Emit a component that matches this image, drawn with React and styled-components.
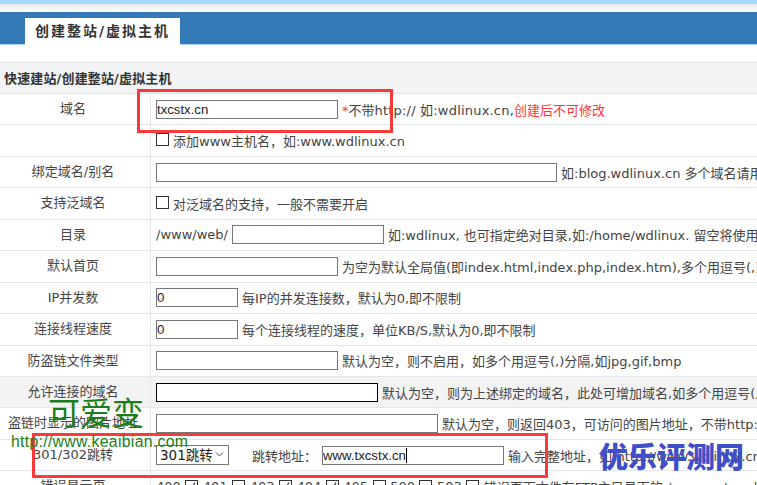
import React from "react";
import styled, { createGlobalStyle } from "styled-components";

const GlobalStyle = createGlobalStyle`
  html, body {
    margin: 0;
    padding: 0;
    width: 757px;
    height: 485px;
    overflow: hidden;
    background: #fff;
    font-family: "DejaVu Sans", "Noto Sans CJK SC", sans-serif;
    font-size: 13px;
    color: #444;
  }
`;

const Page = styled.div`
  position: relative;
  width: 757px;
  height: 485px;
  overflow: hidden;
`;

const TopStrip = styled.div`
  height: 4px;
  background: #a6d7ff;
`;

const TopShade = styled.div`
  height: 8px;
  background: linear-gradient(#ececec, #fff);
`;

const Header = styled.div`
  height: 33px;
  background: #337ab7;
  border-bottom: 1px solid #a6d7ff;
  box-sizing: border-box;
  padding: 6px 0 0 25px;
`;

const Tab = styled.div`
  width: 155px;
  height: 27px;
  box-sizing: border-box;
  background: #fff;
  color: #333;
  font-weight: 700;
  font-size: 14px;
  letter-spacing: 2px;
  line-height: 27px;
  text-align: center;
`;

const Section = styled.div`
  margin-top: 17px;
  height: 32px;
  box-sizing: border-box;
  background: #f1f3f5;
  border-top: 1px solid #e4e6ee;
  border-bottom: 1px solid #e4e6ee;
  padding-left: 4px;
  color: #333;
  font-weight: 700;
  font-size: 13px;
  letter-spacing: 0.15px;
  line-height: 31px;
  white-space: nowrap;
`;

const Row = styled.div`
  display: grid;
  grid-template-columns: 151px 1fr;
  height: 31.45px;
  box-sizing: border-box;
  border-bottom: 1px solid #e4e6ee;
  background: ${(p) => (p.$shaded ? "#f3f3f3" : "#fff")};
`;

const Label = styled.div`
  border-right: 1px solid #e4e6ee;
  padding-right: 4px;
  text-align: center;
  line-height: 30px;
  white-space: nowrap;
`;

const Body = styled.div`
  display: flex;
  align-items: center;
  gap: 4px;
  padding-left: 5px;
  white-space: nowrap;
  overflow: hidden;
  min-width: 0;
`;

const Field = styled.div`
  flex: none;
  box-sizing: border-box;
  width: ${(p) => p.$w}px;
  height: 19px;
  border: 1px solid ${(p) => (p.$focus ? "#000" : "#767676")};
  background: #fff;
  color: #222;
  font-family: "Liberation Sans", sans-serif;
  font-size: 13.2px;
  line-height: 17px;
  overflow: hidden;
`;

const Caret = styled.span`
  display: inline-block;
  width: 1px;
  height: 15px;
  background: #000;
  vertical-align: -3px;
`;

const SelectWrap = styled.div`
  position: relative;
  flex: none;
  width: 73px;
  height: 20px;
`;

const Select = styled.select`
  appearance: none;
  display: block;
  box-sizing: border-box;
  width: 100%;
  height: 100%;
  border: 1px solid #767676;
  border-radius: 0;
  background: #fff;
  color: #222;
  font-family: "DejaVu Sans", "Noto Sans CJK SC", sans-serif;
  font-size: 13.5px;
  padding: 0 0 0 3px;
`;

const Chevron = styled.svg`
  position: absolute;
  right: 5px;
  top: 6px;
  pointer-events: none;
`;

const RedirectLabel = styled.span`
  margin: 0 1px 0 19px;
`;

const Box = styled.span`
  flex: none;
  display: inline-block;
  box-sizing: border-box;
  width: 13px;
  height: 13px;
  border: 1px solid #333;
  background: #fff;
  margin-top: ${(p) => p.$lift || 0}px;
`;

const Red = styled.span`
  color: #f33;
`;

const Spaced = styled.span`
  letter-spacing: 0.2px;
`;

const StatusRow = styled(Body)`
  gap: 4.5px;
`;

const Marker = styled.div`
  position: absolute;
  box-sizing: border-box;
  left: ${(p) => p.$x}px;
  top: ${(p) => p.$y}px;
  width: ${(p) => p.$w}px;
  height: ${(p) => p.$h}px;
  border: 3px solid #f83a3a;
  pointer-events: none;
`;

const WatermarkTitle = styled.div`
  position: absolute;
  left: 48px;
  top: 392px;
  color: #1c7d1c;
  font-family: "Noto Sans CJK SC", sans-serif;
  font-weight: 400;
  font-size: 32px;
  line-height: 38px;
`;

const WatermarkUrl = styled.div`
  position: absolute;
  left: 11px;
  top: 433px;
  color: #1c7d1c;
  font-family: "Liberation Sans", sans-serif;
  font-size: 15.8px;
  line-height: 18px;
  letter-spacing: 0.3px;
`;

const Brand = styled.div`
  position: absolute;
  left: 599px;
  top: 435px;
  color: #3f4fc8;
  font-family: "Noto Sans CJK SC", sans-serif;
  font-weight: 900;
  font-size: 29px;
  line-height: 40px;
  white-space: nowrap;
`;

const Tick = () => (
  <svg width="11" height="11" viewBox="0 0 11 11" style={{ display: "block" }}>
    <path d="M2 6l2.5 3L9 1.5" fill="none" stroke="#333" strokeWidth="1.2" />
  </svg>
);

const statusCodes = [
  ["400", true],
  ["401", false],
  ["403", true],
  ["404", true],
  ["405", false],
  ["500", false],
  ["503", false],
];

export default function App() {
  return (
    <Page>
      <GlobalStyle />
      <TopStrip />
      <TopShade />
      <Header>
        <Tab>创建整站/虚拟主机</Tab>
      </Header>
      <Section>快速建站/创建整站/虚拟主机</Section>

      <Row>
        <Label>域名</Label>
        <Body>
          <Field $w={182}>txcstx.cn</Field>
          <span>
            <Red>*</Red>不带<Spaced>http:// 如:wdlinux.cn,</Spaced>
            <Red>创建后不可修改</Red>
          </span>
        </Body>
      </Row>
      <Row>
        <Label />
        <Body>
          <Box $lift={-3} />
          <span>添加www主机名，如:www.wdlinux.cn</span>
        </Body>
      </Row>
      <Row>
        <Label>绑定域名/别名</Label>
        <Body>
          <Field $w={401} />
          <span>如:blog.wdlinux.cn 多个域名请用逗号分隔</span>
        </Body>
      </Row>
      <Row>
        <Label>支持泛域名</Label>
        <Body>
          <Box $lift={-3} />
          <span>对泛域名的支持，一般不需要开启</span>
        </Body>
      </Row>
      <Row>
        <Label>目录</Label>
        <Body>
          <span>/www/web/</span>
          <Field $w={152} />
          <span>如:wdlinux, 也可指定绝对目录,如:/home/wdlinux. 留空将使用域名</span>
        </Body>
      </Row>
      <Row>
        <Label>默认首页</Label>
        <Body>
          <Field $w={182} />
          <span>为空为默认全局值(即index.html,index.php,index.htm),多个用逗号(,)分隔</span>
        </Body>
      </Row>
      <Row>
        <Label>IP并发数</Label>
        <Body>
          <Field $w={82}>0</Field>
          <span>每IP的并发连接数，默认为0,即不限制</span>
        </Body>
      </Row>
      <Row>
        <Label>连接线程速度</Label>
        <Body>
          <Field $w={82}>0</Field>
          <span>每个连接线程的速度，单位KB/S,默认为0,即不限制</span>
        </Body>
      </Row>
      <Row>
        <Label>防盗链文件类型</Label>
        <Body>
          <Field $w={182} />
          <span>默认为空，则不启用，如多个用逗号(,)分隔,如jpg,gif,bmp</span>
        </Body>
      </Row>
      <Row $shaded>
        <Label>允许连接的域名</Label>
        <Body>
          <Field $w={222} $focus />
          <span>默认为空，则为上述绑定的域名，此处可增加域名,如多个用逗号(,)分隔</span>
        </Body>
      </Row>
      <Row>
        <Label>盗链时显示的图片地址</Label>
        <Body>
          <Field $w={282} />
          <span>默认为空，则返回403，可访问的图片地址，不带http://</span>
        </Body>
      </Row>
      <Row>
        <Label>301/302跳转</Label>
        <Body>
          <SelectWrap>
            <Select defaultValue="301">
              <option value="301">301跳转</option>
              <option value="302">302跳转</option>
            </Select>
            <Chevron width="9" height="7" viewBox="0 0 9 7">
              <path d="M1 1.5l3.5 3.5L8 1.5" fill="none" stroke="#555" strokeWidth="1" />
            </Chevron>
          </SelectWrap>
          <RedirectLabel>跳转地址：</RedirectLabel>
          <Field $w={182}>
            www.txcstx.cn
            <Caret />
          </Field>
          <span>输入完整地址，如:http://www.wdlinux.cn</span>
        </Body>
      </Row>
      <Row>
        <Label>错误显示页</Label>
        <StatusRow>
          {statusCodes.map(([code, checked]) => (
            <React.Fragment key={code}>
              <span>{code}</span>
              <Box>{checked && <Tick />}</Box>
            </React.Fragment>
          ))}
          <span>错误页面文件在FTP主目录下的 /errpage/xxx.html</span>
        </StatusRow>
      </Row>

      <Marker $x={137} $y={89} $w={256} $h={44} />
      <Marker $x={32} $y={433} $w={516} $h={45} />
      <WatermarkTitle>可爱变</WatermarkTitle>
      <WatermarkUrl>http://www.keaibian.com</WatermarkUrl>
      <Brand>优乐评测网</Brand>
    </Page>
  );
}
